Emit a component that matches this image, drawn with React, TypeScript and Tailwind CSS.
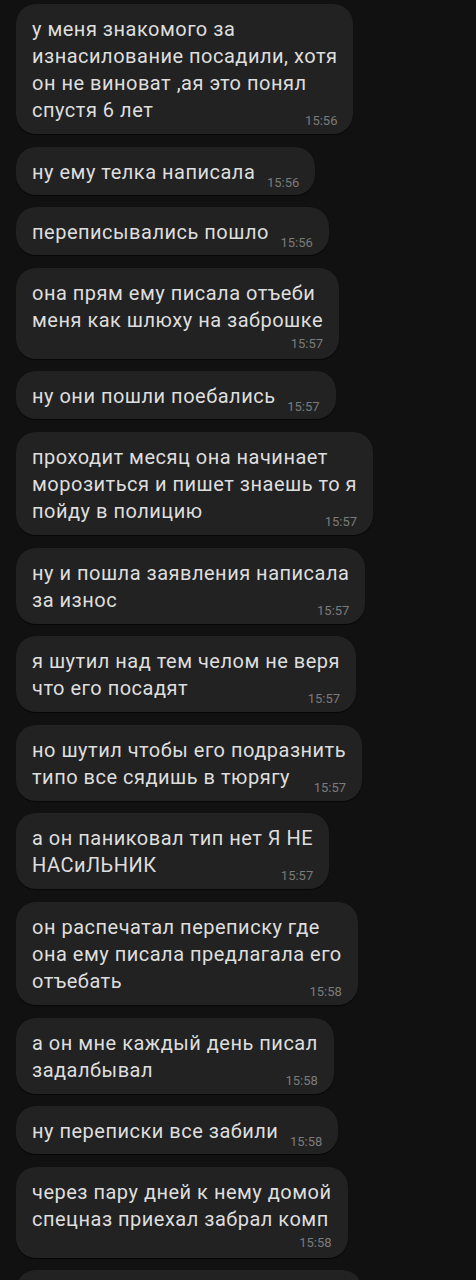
import React from "react";

type Msg = {
    lines: string[];
    time: string;
    // "inline": time sits beside the last line, "block": time gets its own row
    mode: "inline" | "block";
};

const messages: Msg[] = [
    {
        lines: ["у меня знакомого за", "изнасилование посадили, хотя", "он не виноват ,ая это понял", "спустя 6 лет"],
        time: "15:56",
        mode: "inline",
    },
    { lines: ["ну ему телка написала"], time: "15:56", mode: "inline" },
    { lines: ["переписывались пошло"], time: "15:56", mode: "inline" },
    { lines: ["она прям ему писала отъеби", "меня как шлюху на заброшке"], time: "15:57", mode: "block" },
    { lines: ["ну они пошли поебались"], time: "15:57", mode: "inline" },
    {
        lines: ["проходит месяц она начинает", "морозиться и пишет знаешь то я", "пойду в полицию"],
        time: "15:57",
        mode: "inline",
    },
    { lines: ["ну и пошла заявления написала", "за износ"], time: "15:57", mode: "inline" },
    { lines: ["я шутил над тем челом не веря", "что его посадят"], time: "15:57", mode: "inline" },
    { lines: ["но шутил чтобы его подразнить", "типо все сядишь в тюрягу"], time: "15:57", mode: "inline" },
    { lines: ["а он паниковал тип нет Я НЕ", "НАСиЛЬНИК"], time: "15:57", mode: "inline" },
    {
        lines: ["он распечатал переписку где", "она ему писала предлагала его", "отъебать"],
        time: "15:58",
        mode: "inline",
    },
    { lines: ["а он мне каждый день писал", "задалбывал"], time: "15:58", mode: "inline" },
    { lines: ["ну переписки все забили"], time: "15:58", mode: "inline" },
    { lines: ["через пару дней к нему домой", "спецназ приехал забрал комп"], time: "15:58", mode: "block" },
];

function Text({ lines, spacer }: { lines: string[]; spacer?: boolean }) {
    return (
        <p className="col-start-1 row-start-1 whitespace-nowrap text-[20px] leading-[27px] tracking-[0.5px] text-[#dedede]">
            {lines.map((l, i) => (
                <React.Fragment key={i}>
                    {l}
                    {i < lines.length - 1 && <br />}
                </React.Fragment>
            ))}
            {spacer && <span className="inline-block w-[44px]" />}
        </p>
    );
}

function Bubble({ m }: { m: Msg }) {
    const single = m.lines.length === 1;
    if (m.mode === "block") {
        return (
            <div className="w-fit rounded-[20px] bg-[#222222] pl-4 pr-4 pt-3 pb-[8px] shadow-[0_1px_1px_rgba(0,0,0,0.6)]">
                <Text lines={m.lines} />
                <div className="mt-[3px] text-right text-[13px] leading-[14px] text-[#7b7b7b]">
                    {m.time}
                </div>
            </div>
        );
    }
    return (
        <div
            className={
                "grid w-fit rounded-[20px] bg-[#222222] pl-4 pr-4 pt-3 shadow-[0_1px_1px_rgba(0,0,0,0.6)] " +
                (single ? "pb-[9px]" : "pb-[10px]")
            }
        >
            <Text lines={m.lines} spacer />
            <span className="col-start-1 row-start-1 mb-[-4px] self-end justify-self-end text-[13px] leading-[14px] text-[#7b7b7b]">
                {m.time}
            </span>
        </div>
    );
}

export default function App() {
    return (
        <div
            className="h-[1280px] w-[476px] overflow-hidden bg-[#111111]"
            style={{ fontFamily: "Roboto, 'Noto Sans', sans-serif" }}
        >
            <div className="flex flex-col gap-[12.6px] pl-4 pt-1">
                {messages.map((m, i) => (
                    <Bubble key={i} m={m} />
                ))}
                <div className="h-[60px] w-[346px] rounded-[20px] bg-[#222222]" />
            </div>
        </div>
    );
}
